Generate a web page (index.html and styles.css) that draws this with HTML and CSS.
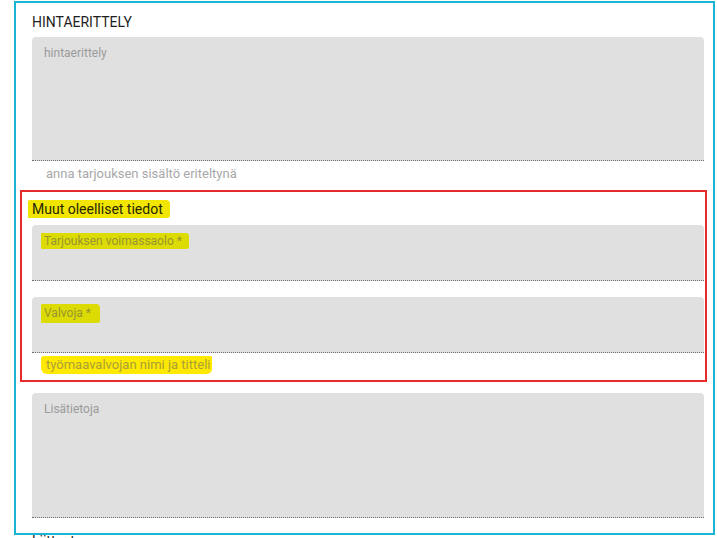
FILE: index.html
```html
<!DOCTYPE html>
<html lang="fi">
<head>
<meta charset="utf-8">
<title>Hintaerittely</title>
<link rel="stylesheet" href="styles.css">
</head>
<body>
<div class="page">
  <section class="panel">
    <h2 class="section-title">HINTAERITTELY</h2>
    <div class="field field-tall">
      <span class="field-label">hintaerittely</span>
    </div>
    <div class="helper">anna tarjouksen sisältö eriteltynä</div>

    <div class="annotated">
      <h3 class="group-title"><span class="mark mark-title">Muut oleelliset tiedot</span></h3>
      <div class="field field-short">
        <span class="field-label"><span class="mark mark-label">Tarjouksen voimassaolo *</span></span>
      </div>
      <div class="field field-short field-gap">
        <span class="field-label"><span class="mark mark-label mark-valvoja">Valvoja *</span></span>
      </div>
      <div class="helper helper-in"><span class="mark mark-helper">työmaavalvojan nimi ja titteli</span></div>
    </div>

    <div class="field field-tall field-last">
      <span class="field-label">Lisätietoja</span>
    </div>
  </section>
  <h2 class="next-title">Liitteet</h2>
</div>
</body>
</html>
```

FILE: styles.css
```css
html, body {
  margin: 0;
  padding: 0;
  background: #ffffff;
  overflow: hidden;
}

body {
  font-family: Roboto, "Liberation Sans", Arial, sans-serif;
  color: #212121;
}

.page {
  width: 717px;
  height: 538px;
  padding-top: 1px;
  box-sizing: border-box;
}

.panel {
  margin-left: 14px;
  width: 701px;
  box-sizing: border-box;
  border: 2px solid #1cb4d4;
  padding: 0 9px 15px 16px;
}

.section-title {
  margin: 0;
  padding-top: 10px;
  margin-bottom: 6px;
  font-size: 14px;
  line-height: 18px;
  font-weight: 400;
  color: #1f1f1f;
}

.field {
  background: #e0e0e0;
  border-radius: 4px 4px 0 0;
  border-bottom: 1px dotted #6f6f6f;
  box-sizing: border-box;
  padding: 8px 12px 0 12px;
}

.field-tall {
  height: 124px;
}

.field-short {
  height: 56px;
}

.field-gap {
  margin-top: 16px;
}

.field-last {
  margin-top: 11px;
  height: 125px;
}

.field-label {
  display: block;
  font-size: 12px;
  line-height: 16px;
  color: #9b9b9b;
}

.helper {
  padding: 5px 0 0 14px;
  font-size: 13px;
  line-height: 16px;
  color: #a8a8a8;
  margin-bottom: 8px;
}

.annotated {
  margin: 0 -3px 0 -12px;
  padding: 0 1px 6px 10px;
  border: 2px solid #e52b2b;
}

.group-title {
  margin: 8px 0 7px 0;
  font-size: 14px;
  line-height: 18px;
  font-weight: 400;
  color: #262600;
}

.mark {
  display: inline-block;
}

.mark-title {
  background: #f2e600;
  margin-left: -4px;
  padding: 0 7px 0 4px;
  border-radius: 2px 4px 3px 1px;
}

.mark-label {
  background: #dcdc04;
  color: #9a9430;
  margin-left: -3px;
  padding: 0 7px 0 3px;
  border-radius: 1px 3px 2px 1px;
}

.mark-valvoja {
  padding-top: 1px;
  padding-bottom: 2px;
  margin-top: -1px;
  padding-right: 9px;
  border-radius: 1px 4px 2px 1px;
}

.helper-in {
  padding: 3px 0 0 9px;
  margin-bottom: 0;
}

.mark-helper {
  background: #ffe900;
  color: #a9a03a;
  padding: 1px 2px 1px 5px;
  border-radius: 3px 2px 5px 6px;
  line-height: 16px;
}

.next-title {
  margin: 0 0 0 32px;
  font-size: 14px;
  line-height: 12px;
  font-weight: 400;
  color: #1f1f1f;
}
```
